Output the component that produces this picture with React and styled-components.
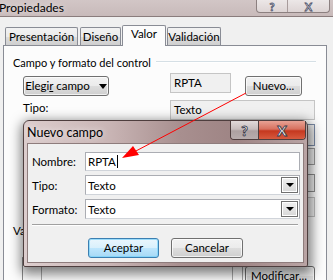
import React from "react";
import styled, { createGlobalStyle } from "styled-components";

const GlobalStyle = createGlobalStyle`
  html, body {
    margin: 0;
    padding: 0;
    overflow: hidden;
  }
  body {
    font-family: "Lato", "Liberation Sans", sans-serif;
    font-size: 11px;
    color: #000;
  }
`;

const Window = styled.div`
  position: relative;
  width: 333px;
  height: 280px;
  overflow: hidden;
  background: #f0f0f0;
  display: flex;
  flex-direction: column;
`;

const TitleBar = styled.div`
  height: 16px;
  flex-shrink: 0;
  display: flex;
  justify-content: space-between;
  align-items: flex-start;
  background: linear-gradient(180deg, #d2c6c6 0%, #c8baba 100%);
  border-bottom: 1px solid #8a7c7c;
`;

const TitleText = styled.span`
  font-size: 12px;
  line-height: 15px;
  margin-left: -1px;
  text-shadow: 0 0 6px rgba(255, 255, 255, 0.8);
`;

const CaptionGroup = styled.div`
  display: flex;
  margin-right: 3px;
  height: 12px;
  border: 1px solid #8c8080;
  border-top: none;
  border-radius: 0 0 4px 4px;
  overflow: hidden;
  background: linear-gradient(180deg, #ece7e7 0%, #ddd4d4 100%);
`;

const CaptionBtn = styled.div`
  width: ${(p) => p.$w}px;
  display: flex;
  justify-content: center;
  align-items: center;
  font-weight: 700;
  font-size: 11px;
  line-height: 11px;
  color: #f4f4fa;
  -webkit-text-stroke: 0.8px #4c5068;
  border-left: ${(p) => (p.$first ? "none" : "1px solid #a89b9b")};
`;

const Body = styled.div`
  flex: 1;
  display: flex;
  flex-direction: column;
  padding: 8px 6px 0 3px;
`;

const TabStrip = styled.div`
  display: flex;
  align-items: flex-end;
  height: 20px;
  padding-left: 2px;
`;

const Tab = styled.div`
  position: relative;
  box-sizing: border-box;
  width: ${(p) => p.$w}px;
  margin-right: ${(p) => p.$gap || 0}px;
  height: ${(p) => (p.$active ? 21 : 18)}px;
  margin-bottom: ${(p) => (p.$active ? -1 : 0)}px;
  z-index: ${(p) => (p.$active ? 2 : 0)};
  border: 1px solid #898c95;
  border-bottom: none;
  border-radius: 2px 2px 0 0;
  background: ${(p) =>
    p.$active ? "#fcfcfc" : "linear-gradient(180deg, #f2f2f2 0%, #ebebeb 50%, #dddddd 51%, #cfcfcf 100%)"};
  text-align: center;
  font-size: 11.5px;
  line-height: ${(p) => (p.$active ? 15 : 17)}px;
`;

const Panel = styled.div`
  flex: 1;
  box-sizing: border-box;
  border: 1px solid #898c95;
  border-bottom: none;
  background: #fcfcfc;
  padding: 9px 10px 0 9px;
  display: flex;
  flex-direction: column;
`;

const GroupHeader = styled.div`
  display: flex;
  align-items: center;
  height: 14px;
  gap: 5px;
  font-size: 11px;
  &::after {
    content: "";
    flex: 1;
    height: 1px;
    background: #d5dfe5;
    border-bottom: 1px solid #fff;
  }
`;

const Row = styled.div`
  display: flex;
  align-items: flex-start;
  margin-top: ${(p) => p.$mt || 0}px;
  padding-left: ${(p) => (p.$indent === undefined ? 10 : p.$indent)}px;
`;

const Label = styled.div`
  width: ${(p) => p.$w || 147}px;
  padding-top: ${(p) => p.$pt || 0}px;
  line-height: 14px;
  font-size: 11.5px;
  white-space: nowrap;
`;

const WinButton = styled.div`
  box-sizing: border-box;
  width: ${(p) => p.$w}px;
  height: 20px;
  margin-top: ${(p) => p.$mt || 0}px;
  margin-left: ${(p) => p.$ml || 0}px;
  border: 1px solid ${(p) => (p.$default ? "#3c7fb1" : "#707070")};
  border-radius: 3px;
  background: ${(p) =>
    p.$default
      ? "linear-gradient(180deg, #eaf6fd 0%, #d9f0fc 50%, #bee6fd 51%, #a7d9f5 100%)"
      : "linear-gradient(180deg, #f2f2f2 0%, #ebebeb 50%, #dddddd 51%, #cfcfcf 100%)"};
  box-shadow: inset 0 0 0 1px ${(p) => (p.$default ? "rgba(120, 210, 250, 0.7)" : "rgba(255, 255, 255, 0.7)")};
  display: flex;
  align-items: center;
  justify-content: ${(p) => p.$justify || "center"};
  gap: 9px;
  font-size: 11.5px;
  line-height: 18px;
  white-space: nowrap;
  u {
    text-decoration-thickness: 1px;
  }
`;

const Caret = styled.span`
  width: 0;
  height: 0;
  border-left: 4px solid transparent;
  border-right: 4px solid transparent;
  border-top: 5px solid #000;
`;

const ReadBox = styled.div`
  box-sizing: border-box;
  width: ${(p) => p.$w}px;
  height: ${(p) => p.$h || 20}px;
  margin-top: ${(p) => p.$mt || 0}px;
  margin-left: ${(p) => p.$ml || 0}px;
  border: 1px solid ${(p) => p.$border || "#c5c5c5"};
  background: #f0f0f0;
  padding-left: 3px;
  font-size: 11.5px;
  line-height: 18px;
`;

const ListBox = styled.div`
  box-sizing: border-box;
  width: 221px;
  height: 40px;
  border: 1px solid #a0a0a0;
  border-left: 1px solid #8a8a8a;
  display: grid;
  grid-template-columns: 18px 1fr 10px;
  & > div + div {
    border-left: 1px solid #a8a8a8;
  }
`;

const Modal = styled.div`
  position: absolute;
  left: 23px;
  top: 120px;
  width: 285px;
  height: 147px;
  box-sizing: border-box;
  border: 1px solid #4e3e3e;
  border-radius: 6px 6px 2px 2px;
  padding: 0 3px 3px 3px;
  display: flex;
  flex-direction: column;
  background: linear-gradient(90deg, #dccdcd 0%, #c9b5b5 30%, #a88f8f 55%, #9e8484 75%, #b9a4a4 100%);
  box-shadow: 1px 4px 12px 3px rgba(0, 0, 0, 0.5);
  z-index: 5;
`;

const ModalHead = styled.div`
  height: 22px;
  display: flex;
  justify-content: space-between;
  align-items: flex-start;
`;

const ModalTitle = styled.span`
  font-size: 12.5px;
  line-height: 23px;
  text-shadow: 0 0 6px rgba(255, 255, 255, 0.9);
`;

const ModalCaption = styled.div`
  display: flex;
  height: 18px;
  margin-right: -2px;
  border: 1px solid #4e3e3e;
  border-top: none;
  border-radius: 0 0 4px 4px;
  overflow: hidden;
`;

const ModalCapBtn = styled.div`
  width: ${(p) => p.$w}px;
  display: flex;
  justify-content: center;
  align-items: center;
  font-weight: 900;
  font-size: 14px;
  color: #fff;
  -webkit-text-stroke: 0.9px #3a3a4a;
  background: ${(p) =>
    p.$close
      ? "linear-gradient(180deg, #e8a294 0%, #d7715f 45%, #c5381f 55%, #d75a3e 100%)"
      : "linear-gradient(180deg, #e2dada 0%, #c8bdbd 45%, #ada1a1 55%, #b8adad 100%)"};
  border-left: ${(p) => (p.$close ? "1px solid #4e3e3e" : "none")};
`;

const ModalBody = styled.div`
  flex: 1;
  background: #f0f0f0;
  border: 1px solid #8e7c7c;
  padding: 7px 4px 0 4px;
  display: flex;
  flex-direction: column;
  font-size: 11.5px;
`;

const FieldGrid = styled.div`
  display: grid;
  grid-template-columns: 53px 215px;
  grid-auto-rows: 20px;
  row-gap: 4px;
  align-items: center;
`;

const Field = styled.div`
  box-sizing: border-box;
  height: ${(p) => (p.$select ? 20 : 19)}px;
  border: 1px solid #abadb3;
  border-bottom-color: #d0d4da;
  background: #fff;
  display: flex;
  align-items: center;
  padding-left: 2px;
`;

const TextCaret = styled.span`
  width: 1px;
  height: 13px;
  background: #000;
  margin-left: 1px;
`;

const DropBtn = styled.div`
  box-sizing: border-box;
  margin-left: auto;
  margin-right: 1px;
  width: 17px;
  height: 16px;
  border: 1px solid #707070;
  box-shadow: inset 0 0 0 1px #fff;
  background: linear-gradient(180deg, #f0f0f0, #d8d8d8);
  display: flex;
  align-items: center;
  justify-content: center;
  &::after {
    content: "";
    border-left: 4px solid transparent;
    border-right: 4px solid transparent;
    border-top: 4px solid #000;
  }
`;

const Separator = styled.div`
  width: 266px;
  height: 1px;
  margin-top: 5px;
  background: #a0a0a0;
  border-bottom: 1px solid #fff;
`;

const ModalButtons = styled.div`
  display: flex;
  gap: 12px;
  margin-top: 12px;
  padding-left: 56px;
`;

const ArrowLayer = styled.svg`
  position: absolute;
  left: 0;
  top: 0;
  z-index: 10;
  pointer-events: none;
`;

export default function App() {
  return (
    <Window>
      <GlobalStyle />
      <TitleBar>
        <TitleText>Propiedades</TitleText>
        <CaptionGroup>
          <CaptionBtn $w={30} $first>?</CaptionBtn>
          <CaptionBtn $w={41}>X</CaptionBtn>
        </CaptionGroup>
      </TitleBar>

      <Body>
        <TabStrip>
          <Tab $w={73} $gap={2}>Presentación</Tab>
          <Tab $w={41} $gap={1}>Diseño</Tab>
          <Tab $w={44} $gap={1} $active>Valor</Tab>
          <Tab $w={54}>Validación</Tab>
        </TabStrip>

        <Panel>
          <GroupHeader>Campo y formato del control</GroupHeader>

          <Row $mt={4}>
            <WinButton $w={86} $mt={3}>
              <span>
                Elegi<u>r</u> campo
              </span>
              <Caret />
            </WinButton>
            <ReadBox $w={61} $ml={61}>RPTA</ReadBox>
            <WinButton $w={57} $ml={14} $mt={3}>Nuevo...</WinButton>
          </Row>

          <Row $mt={4}>
            <Label $pt={1}>Tipo:</Label>
            <ReadBox $w={145}>Texto</ReadBox>
          </Row>

          <Row $mt={4}>
            <Label />
            <ReadBox $w={145} $h={22} $border="#7c8ca8" />
          </Row>
          <Row $mt={2}>
            <Label />
            <ReadBox $w={145} $h={17} $border="#9a9a9a" />
          </Row>
          <Row $mt={9}>
            <Label />
            <ReadBox $w={145} $h={18} $border="#8e8e8e" />
          </Row>
          <Row $mt={5}>
            <Label />
            <ReadBox $w={145} $h={20} $border="#c0c0c0" />
          </Row>

          <Row $mt={7} $indent={0}>
            <Label>Valor predeterminado:</Label>
          </Row>

          <Row $mt={19} $indent={9}>
            <ListBox>
              <div />
              <div />
              <div />
            </ListBox>
            <WinButton $w={70} $ml={2} $mt={9} $justify="flex-start">
              <span style={{ paddingLeft: 5 }}>Modificar...</span>
            </WinButton>
          </Row>
        </Panel>
      </Body>

      <Modal>
        <ModalHead>
          <ModalTitle>Nuevo campo</ModalTitle>
          <ModalCaption>
            <ModalCapBtn $w={27}>?</ModalCapBtn>
            <ModalCapBtn $w={46} $close>X</ModalCapBtn>
          </ModalCaption>
        </ModalHead>
        <ModalBody>
          <FieldGrid>
            <span>Nombre:</span>
            <Field>
              RPTA
              <TextCaret />
            </Field>
            <span>Tipo:</span>
            <Field $select>
              Texto
              <DropBtn />
            </Field>
            <span>Formato:</span>
            <Field $select>
              Texto
              <DropBtn />
            </Field>
          </FieldGrid>
          <Separator />
          <ModalButtons>
            <WinButton $w={71} $default>Aceptar</WinButton>
            <WinButton $w={72}>Cancelar</WinButton>
          </ModalButtons>
        </ModalBody>
      </Modal>

      <ArrowLayer width="333" height="280" viewBox="0 0 333 280">
        <line x1="246" y1="93" x2="134" y2="152" stroke="#f00" strokeWidth="1" />
        <polygon points="122,158 139,155 133,146" fill="#f00" />
      </ArrowLayer>
    </Window>
  );
}
